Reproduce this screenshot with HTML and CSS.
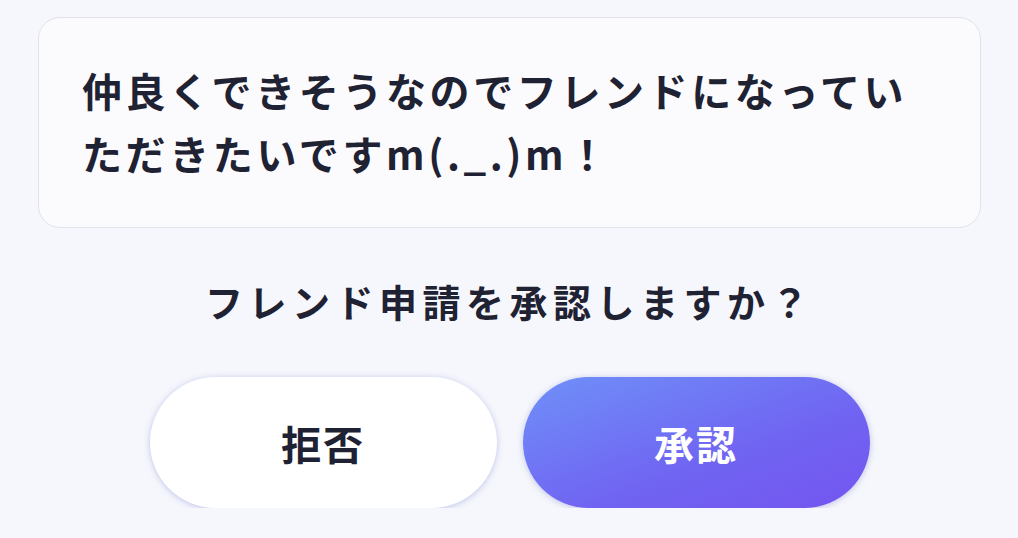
FILE: index.html
```html
<!DOCTYPE html>
<html lang="ja">
<head>
  <meta charset="UTF-8">
  <title>フレンド申請</title>
  <link rel="stylesheet" href="styles.css">
</head>
<body>

<!-- フレンド申請ダイアログ -->
<main class="request">
  <div class="message-card">
    <p class="message">仲良くできそうなのでフレンドになっていただきたいですm(._.)m！</p>
  </div>

  <p class="question">フレンド申請を承認しますか？</p>

  <div class="actions">
    <button class="btn btn-reject">拒否</button>
    <button class="btn btn-accept">承認</button>
  </div>
</main>

</body>
</html>
```

FILE: styles.css
```css
* { box-sizing: border-box; }

body {
  margin: 0;
  background: #f6f7fc;
  color: #1f2232;
  font-family: "Noto Sans CJK JP", "Noto Sans", sans-serif;
}

.request {
  padding: 17px 37px 0 38px;
  display: flex;
  flex-direction: column;
  align-items: center;
}

.message-card {
  width: 100%;
  height: 211px;
  padding: 41px 40px 0 43px;
  background: #fbfbfe;
  border: 1px solid #e1e3ec;
  border-radius: 22px;
}

.message {
  margin: 0;
  font-size: 40px;
  font-weight: 600;
  line-height: 63px;
  letter-spacing: 3.6px;
}

.question {
  margin: 48px 0 0;
  font-size: 38px;
  font-weight: 600;
  line-height: 50px;
  letter-spacing: 5.5px;
}

.actions {
  display: flex;
  gap: 26px;
  margin-top: 51px;
}

.btn {
  width: 347px;
  height: 131px;
  border: none;
  border-radius: 66px;
  font-family: inherit;
  font-size: 40px;
  font-weight: 600;
  letter-spacing: 2px;
  cursor: pointer;
  box-shadow: 0 1px 6px rgba(120, 132, 210, 0.45);
}

.btn-reject {
  background: #ffffff;
  color: #1f2232;
}

.btn-accept {
  background: linear-gradient(160deg, #6f90f8 0%, #7064f2 60%, #7455ef 100%);
  color: #ffffff;
}
```
